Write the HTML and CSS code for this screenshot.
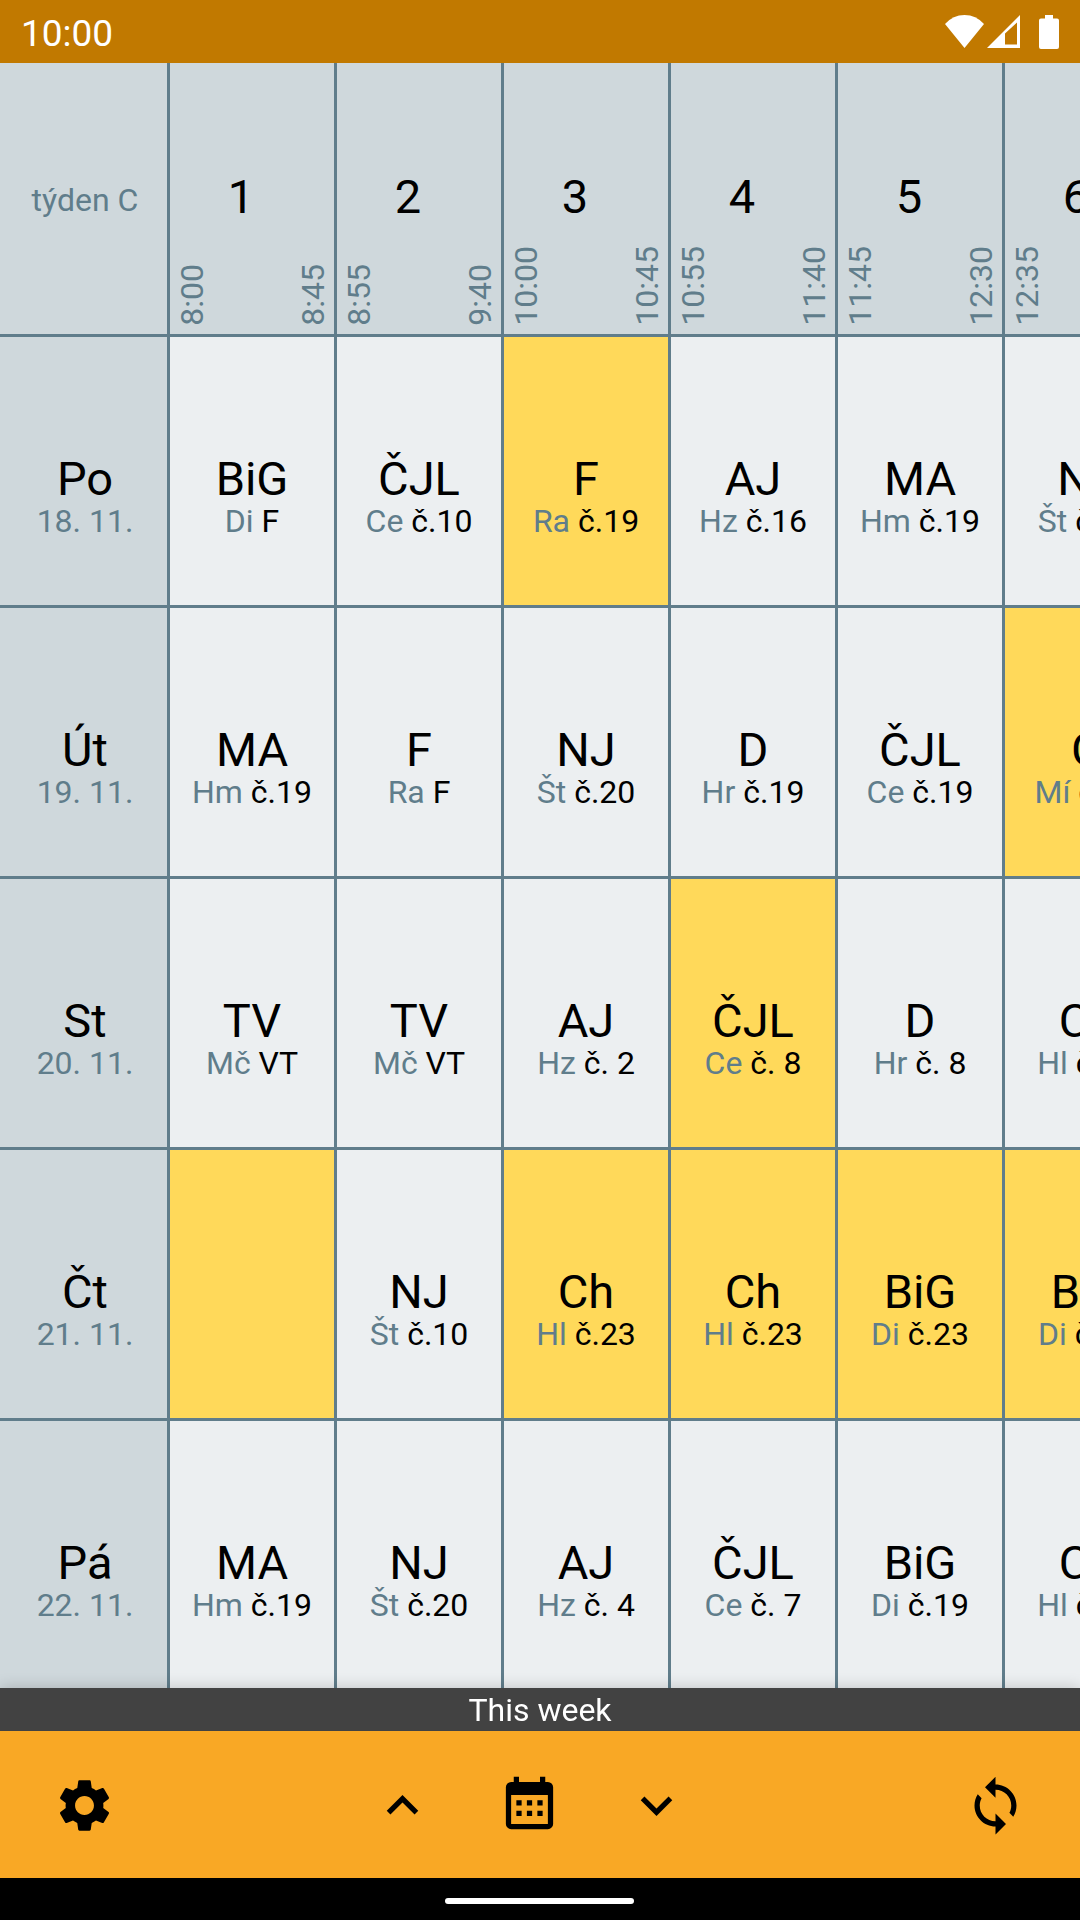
FILE: index.html
```html
<!DOCTYPE html>
<html lang="cs">
<head>
<meta charset="utf-8">
<meta name="viewport" content="width=device-width, initial-scale=1">
<title>Rozvrh</title>
<link rel="stylesheet" href="styles.css">
</head>
<body>
<div class="app">
  <header class="status">
    <time class="clock">10:00</time>
    <div class="indicators">
      <svg class="wifi" viewBox="0 0 39 33" aria-hidden="true"><path d="M0 9Q8 0 19.500 0T39 9L19.500 33Z"/></svg>
      <svg class="signal" viewBox="0 0 33 33" aria-hidden="true"><path fill-rule="evenodd" d="M33 0V33H0ZM18 18.500V29.500H30V7.500Z"/></svg>
      <svg class="battery" viewBox="0 0 20 34" aria-hidden="true"><path d="M6 0H14V3.500H18Q20 3.500 20 5.500V32Q20 34 18 34H2Q0 34 0 32V5.500Q0 3.500 2 3.500H6Z"/></svg>
    </div>
  </header>

  <main class="viewport">
    <table class="timetable">
      <thead>
        <tr>
          <th class="week" scope="col">týden C</th>
          <th scope="col"><div class="period"><span class="number">1</span><span class="times"><time>8:00</time><time>8:45</time></span></div></th>
          <th scope="col"><div class="period"><span class="number">2</span><span class="times"><time>8:55</time><time>9:40</time></span></div></th>
          <th scope="col"><div class="period"><span class="number">3</span><span class="times"><time>10:00</time><time>10:45</time></span></div></th>
          <th scope="col"><div class="period"><span class="number">4</span><span class="times"><time>10:55</time><time>11:40</time></span></div></th>
          <th scope="col"><div class="period"><span class="number">5</span><span class="times"><time>11:45</time><time>12:30</time></span></div></th>
          <th scope="col"><div class="period"><span class="number">6</span><span class="times"><time>12:35</time><time>13:20</time></span></div></th>
        </tr>
      </thead>
      <tbody>
        <tr>
          <th scope="row"><div class="subject">Po</div><div class="detail teacher">18. 11.</div></th>
          <td><div class="subject">BiG</div><div class="detail"><span class="teacher">Di</span> F</div></td>
          <td><div class="subject">ČJL</div><div class="detail"><span class="teacher">Ce</span> č.10</div></td>
          <td class="changed"><div class="subject">F</div><div class="detail"><span class="teacher">Ra</span> č.19</div></td>
          <td><div class="subject">AJ</div><div class="detail"><span class="teacher">Hz</span> č.16</div></td>
          <td><div class="subject">MA</div><div class="detail"><span class="teacher">Hm</span> č.19</div></td>
          <td><div class="subject">NJ</div><div class="detail"><span class="teacher">Št</span> č.20</div></td>
        </tr>
        <tr>
          <th scope="row"><div class="subject">Út</div><div class="detail teacher">19. 11.</div></th>
          <td><div class="subject">MA</div><div class="detail"><span class="teacher">Hm</span> č.19</div></td>
          <td><div class="subject">F</div><div class="detail"><span class="teacher">Ra</span> F</div></td>
          <td><div class="subject">NJ</div><div class="detail"><span class="teacher">Št</span> č.20</div></td>
          <td><div class="subject">D</div><div class="detail"><span class="teacher">Hr</span> č.19</div></td>
          <td><div class="subject">ČJL</div><div class="detail"><span class="teacher">Ce</span> č.19</div></td>
          <td class="changed"><div class="subject">G</div><div class="detail"><span class="teacher">Mí</span> č.19</div></td>
        </tr>
        <tr>
          <th scope="row"><div class="subject">St</div><div class="detail teacher">20. 11.</div></th>
          <td><div class="subject">TV</div><div class="detail"><span class="teacher">Mč</span> VT</div></td>
          <td><div class="subject">TV</div><div class="detail"><span class="teacher">Mč</span> VT</div></td>
          <td><div class="subject">AJ</div><div class="detail"><span class="teacher">Hz</span> č. 2</div></td>
          <td class="changed"><div class="subject">ČJL</div><div class="detail"><span class="teacher">Ce</span> č. 8</div></td>
          <td><div class="subject">D</div><div class="detail"><span class="teacher">Hr</span> č. 8</div></td>
          <td><div class="subject">Ch</div><div class="detail"><span class="teacher">Hl</span> č.23</div></td>
        </tr>
        <tr>
          <th scope="row"><div class="subject">Čt</div><div class="detail teacher">21. 11.</div></th>
          <td class="changed"></td>
          <td><div class="subject">NJ</div><div class="detail"><span class="teacher">Št</span> č.10</div></td>
          <td class="changed"><div class="subject">Ch</div><div class="detail"><span class="teacher">Hl</span> č.23</div></td>
          <td class="changed"><div class="subject">Ch</div><div class="detail"><span class="teacher">Hl</span> č.23</div></td>
          <td class="changed"><div class="subject">BiG</div><div class="detail"><span class="teacher">Di</span> č.23</div></td>
          <td class="changed"><div class="subject">BiG</div><div class="detail"><span class="teacher">Di</span> č.23</div></td>
        </tr>
        <tr>
          <th scope="row"><div class="subject">Pá</div><div class="detail teacher">22. 11.</div></th>
          <td><div class="subject">MA</div><div class="detail"><span class="teacher">Hm</span> č.19</div></td>
          <td><div class="subject">NJ</div><div class="detail"><span class="teacher">Št</span> č.20</div></td>
          <td><div class="subject">AJ</div><div class="detail"><span class="teacher">Hz</span> č. 4</div></td>
          <td><div class="subject">ČJL</div><div class="detail"><span class="teacher">Ce</span> č. 7</div></td>
          <td><div class="subject">BiG</div><div class="detail"><span class="teacher">Di</span> č.19</div></td>
          <td><div class="subject">Ch</div><div class="detail"><span class="teacher">Hl</span> č.23</div></td>
        </tr>
      </tbody>
    </table>
  </main>

  <div class="banner">This week</div>

  <nav class="toolbar">
    <button type="button" class="edge" aria-label="Settings">
      <svg class="icon" viewBox="0 0 24 24"><path d="M19.140 12.940c.040-.300.060-.610.060-.940 0-.320-.020-.640-.070-.940l2.030-1.580c.180-.140.230-.410.120-.610l-1.920-3.320c-.120-.220-.370-.290-.590-.220l-2.390.960c-.500-.380-1.030-.700-1.620-.940l-.360-2.540c-.040-.240-.240-.410-.480-.410h-3.840c-.240 0-.430.170-.470.410l-.360 2.540c-.590.240-1.130.570-1.620.940l-2.390-.960c-.220-.080-.470 0-.590.220L2.740 8.870c-.120.210-.080.470.120.610l2.030 1.580c-.050.300-.090.630-.090.940s.020.640.070.940l-2.030 1.580c-.180.140-.230.410-.120.610l1.920 3.320c.120.220.370.290.590.220l2.390-.960c.500.380 1.030.700 1.620.940l.360 2.540c.050.240.240.410.480.410h3.840c.240 0 .440-.170.470-.410l.360-2.540c.590-.240 1.130-.560 1.620-.940l2.390.960c.220.080.470 0 .590-.220l1.920-3.320c.120-.220.070-.470-.120-.610l-2.010-1.580zM12 15.600c-1.980 0-3.600-1.620-3.600-3.600s1.620-3.600 3.600-3.600 3.600 1.620 3.600 3.600-1.620 3.600-3.600 3.600z"/></svg>
    </button>
    <div class="pager">
      <button type="button" aria-label="Previous week">
        <svg class="icon" viewBox="0 0 24 24"><path d="M7.410 15.410L12 10.830l4.590 4.580L18 14l-6-6-6 6z"/></svg>
      </button>
      <button type="button" aria-label="Current week">
        <svg class="icon" viewBox="0 0 24 24"><path fill-rule="evenodd" d="M6 1h2v2h8V1h2v2h1a2 2 0 0 1 2 2v14a2 2 0 0 1-2 2H5a2 2 0 0 1-2-2V5a2 2 0 0 1 2-2h1zM5 8v11h14V8zM7 10h2v2H7zM11 10h2v2h-2zM15 10h2v2h-2zM7 14h2v2H7zM11 14h2v2h-2zM15 14h2v2h-2z"/></svg>
      </button>
      <button type="button" aria-label="Next week">
        <svg class="icon" viewBox="0 0 24 24"><path d="M7.410 8.590L12 13.170l4.590-4.580L18 10l-6 6-6-6z"/></svg>
      </button>
    </div>
    <button type="button" class="edge" aria-label="Refresh">
      <svg class="icon" viewBox="0 0 24 24"><path d="M12 4V1L8 5l4 4V6c3.310 0 6 2.690 6 6 0 1.010-.250 1.970-.700 2.800l1.460 1.460C19.540 15.030 20 13.570 20 12c0-4.420-3.580-8-8-8zm0 14c-3.310 0-6-2.690-6-6 0-1.010.250-1.970.700-2.800L5.240 7.740C4.460 8.970 4 10.430 4 12c0 4.420 3.580 8 8 8v3l4-4-4-4z"/></svg>
    </button>
  </nav>

  <footer class="gesture"><div class="handle"></div></footer>
</div>
</body>
</html>
```

FILE: styles.css
```css
* {
  box-sizing: border-box;
}

body {
  margin: 0;
  background: #000;
  color: #000;
  font-family: Roboto, sans-serif;
  font-size: 32px;
  line-height: 37px;
}

.app {
  display: flex;
  flex-direction: column;
  height: 100vh;
}

.status {
  flex: none;
  display: flex;
  align-items: center;
  justify-content: space-between;
  height: 63px;
  padding: 0 21px;
  background: #c17900;
  color: #fff;
}

.clock {
  font-size: 37px;
  line-height: 43px;
  padding-top: 3px;
}

.indicators {
  display: flex;
  align-items: center;
  gap: 3px;
}

.indicators svg {
  fill: currentColor;
}

.wifi {
  width: 39px;
  height: 33px;
}

.signal {
  width: 33px;
  height: 33px;
}

.battery {
  width: 20px;
  height: 34px;
  margin-left: 16px;
}

/* Scrollable timetable */
.viewport {
  flex: 1;
  min-height: 0;
  overflow: auto;
  scrollbar-width: none;
  background: #eceff1;
}

.timetable {
  table-layout: fixed;
  width: 1169px;
  border-spacing: 0;
}

.timetable tr {
  height: 271px;
}

.timetable th,
.timetable td {
  padding: 0;
  border: 0 solid #607d8b;
  text-align: center;
  font-weight: 400;
}

.timetable th {
  background: #cfd8dc;
}

.timetable td {
  background: #eceff1;
}

.timetable th + th,
.timetable td {
  border-left-width: 3px;
}

.timetable tbody th,
.timetable tbody td {
  border-top-width: 3px;
  padding-top: 52px;
}

.timetable td.changed {
  background: #ffd95a;
}

.timetable .week {
  padding: 3px 0 0 3px;
  color: #607d8b;
}

.timetable tbody th {
  padding-left: 3px;
}

.subject,
.number {
  font-size: 47px;
  line-height: 49px;
}

.teacher {
  color: #607d8b;
}

.period {
  display: flex;
  flex-direction: column;
  height: 271px;
  padding: 109px 2px 8px 4px;
}

.number {
  padding-right: 24px;
}

.times {
  flex: 1;
  display: flex;
  align-items: flex-end;
  justify-content: space-between;
  color: #607d8b;
}

.times time {
  writing-mode: vertical-rl;
  transform: rotate(180deg);
}

.banner {
  flex: none;
  position: relative;
  padding: 4px 0 2px;
  background: #424242;
  box-shadow: 0 0 16px rgba(0, 0, 0, .2);
  color: #fff;
  text-align: center;
}

/* Bottom toolbar */
.toolbar {
  flex: none;
  position: relative;
  display: flex;
  justify-content: space-between;
  height: 147px;
  padding-top: 1px;
  background: #f9a825;
}

.toolbar button {
  display: flex;
  align-items: center;
  justify-content: center;
  width: 127px;
  padding: 0;
  border: 0;
  background: none;
  color: inherit;
}

.toolbar .edge {
  width: 169px;
}

.pager {
  display: flex;
  padding-right: 21px;
}

.icon {
  width: 63px;
  height: 63px;
  fill: currentColor;
}

.gesture {
  flex: none;
  display: flex;
  align-items: center;
  justify-content: center;
  height: 42px;
  padding: 4px 2px 0 0;
  background: #000;
}

.handle {
  width: 189px;
  height: 6px;
  border-radius: 3px;
  background: #fff;
}
```
